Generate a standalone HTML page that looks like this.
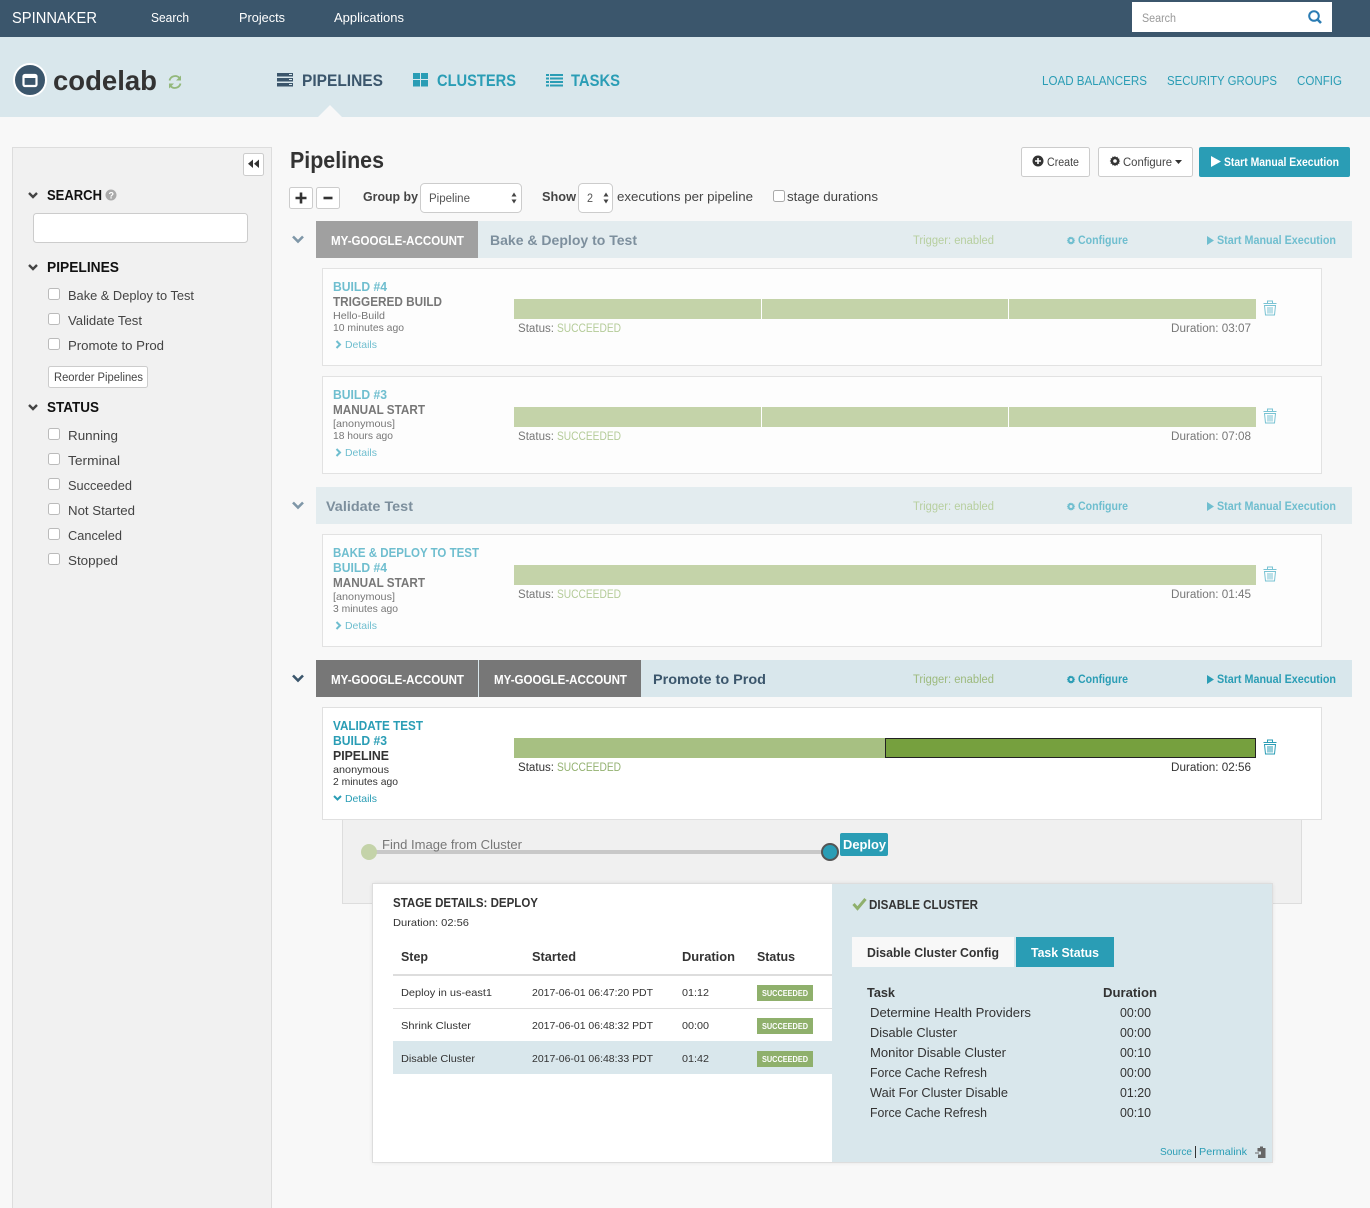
<!DOCTYPE html>
<html><head><meta charset="utf-8"><title>Spinnaker</title>
<style>
html,body{margin:0;padding:0;background:#f8f8f8;width:1370px;height:1208px;overflow:hidden}
svg{display:block}
text{font-family:"Liberation Sans",sans-serif;font-size:13px;fill:#444;white-space:pre}
.b{font-weight:bold}
.s12{font-size:11.5px}.s11{font-size:10.5px}.s14{font-size:14px}.s16{font-size:15.5px}
.teal{fill:#2a9db5}.lteal{fill:#6fbecf}.w{fill:#fff}
.g{fill:#777}.gg{fill:#93a86f}
</style></head><body>
<svg xmlns="http://www.w3.org/2000/svg" width="1370" height="1208" viewBox="0 0 1370 1208">
<defs>
<filter id="sh" x="-3%" y="-5%" width="106%" height="110%"><feGaussianBlur stdDeviation="2.500"/></filter>
<g id="trash" fill="none" stroke-width="1"><path d="M0.500 3.500H13.500M4.500 3.500V1H9.500V3.500M1.500 5.500H12.500L11.500 15H2.500ZM5 7V13.500M7 7V13.500M9 7V13.500"/></g>
<path id="chev" d="M-5 -2.500L0 2.500L5 -2.500" fill="none" stroke-width="2.600"/>
<path id="chevs" d="M-4 -2L0 2L4 -2" fill="none" stroke-width="2.400"/>
<path id="chevr" d="M-2 -3.500L1.500 0L-2 3.500" fill="none" stroke-width="2"/>
<path id="gear" fill-rule="evenodd" d="M0-5l1 1.300 1.600-.5.300 1.600 1.600.3-.5 1.600L5.300 0 4 1l.5 1.600-1.600.3-.3 1.600L1 4 0 5.300-1 4l-1.600.5-.3-1.600-1.600-.3.5-1.600L-5.300 0-4-1l-.5-1.600 1.600-.3.3-1.600L-1-4zM0-1.800A1.800 1.800 0 1 0 0 1.800A1.800 1.800 0 1 0 0-1.800z"/>
</defs>

<!-- top bar -->
<rect width="1370" height="37" fill="#3b566c"/>
<text class="w" style="font-size:15.500px" x="12" y="23" textLength="85" lengthAdjust="spacingAndGlyphs">SPINNAKER</text>
<text class="w" x="151" y="22" textLength="38" lengthAdjust="spacingAndGlyphs">Search</text>
<text class="w" x="239" y="22" textLength="46" lengthAdjust="spacingAndGlyphs">Projects</text>
<text class="w" x="334" y="22" textLength="70" lengthAdjust="spacingAndGlyphs">Applications</text>
<rect x="1132" y="2" width="200" height="30" fill="#fff"/>
<text class="s12" style="fill:#999" x="1142" y="22" textLength="34" lengthAdjust="spacingAndGlyphs">Search</text>
<circle cx="1314" cy="16" r="4.800" fill="none" stroke="#2b7cb3" stroke-width="2"/><path d="M1317.500 19.500L1321 23" stroke="#2b7cb3" stroke-width="2.600"/>

<!-- app header -->
<rect y="37" width="1370" height="80" fill="#d9e7ec"/>
<path d="M318 117L330 105L342 117Z" fill="#f8f8f8"/>
<circle cx="30" cy="80" r="16" fill="#3b566c" stroke="#fff" stroke-width="2"/>
<rect x="23.500" y="75" width="13" height="11" rx="1.500" fill="none" stroke="#fff" stroke-width="2.200"/><rect x="23" y="75" width="14" height="3" fill="#fff"/>
<text class="b" style="font-size:28px;fill:#333" x="53" y="90" textLength="104" lengthAdjust="spacingAndGlyphs">codelab</text>
<g fill="none" stroke="#93b87b" stroke-width="1.800"><path d="M169.500 80.500A5.800 5.800 0 0 1 179.500 78"/><path d="M180.500 83.500A5.800 5.800 0 0 1 170.500 86"/></g>
<path d="M181 75.500V80.500H176ZM169 88.500V83.500H174Z" fill="#93b87b"/>

<g fill="#3b566c"><rect x="277" y="73" width="16" height="3.500"/><rect x="277" y="78" width="16" height="3.500"/><rect x="277" y="83" width="16" height="3.500"/></g>
<g fill="#d9e7ec"><rect x="289" y="74" width="3" height="1"/><rect x="289" y="79" width="3" height="1"/><rect x="289" y="84" width="3" height="1"/></g>
<text class="b" style="font-size:16.500px;fill:#3b566c" x="302" y="86" textLength="81" lengthAdjust="spacingAndGlyphs">PIPELINES</text>
<g fill="#2a9db5"><rect x="413" y="73" width="7" height="6"/><rect x="421" y="73" width="7" height="6"/><rect x="413" y="80" width="7" height="6.500"/><rect x="421" y="80" width="7" height="6.500"/></g>
<text class="b teal" style="font-size:16.500px" x="437" y="86" textLength="79" lengthAdjust="spacingAndGlyphs">CLUSTERS</text>
<g fill="#2a9db5"><rect x="546" y="74" width="3" height="2"/><rect x="550" y="74" width="13" height="2"/><rect x="546" y="77.500" width="3" height="2"/><rect x="550" y="77.500" width="13" height="2"/><rect x="546" y="81" width="3" height="2"/><rect x="550" y="81" width="13" height="2"/><rect x="546" y="84.500" width="3" height="2"/><rect x="550" y="84.500" width="13" height="2"/></g>
<text class="b teal" style="font-size:16.500px" x="571" y="86" textLength="49" lengthAdjust="spacingAndGlyphs">TASKS</text>
<text class="teal" x="1042" y="85" textLength="105" lengthAdjust="spacingAndGlyphs">LOAD BALANCERS</text>
<text class="teal" x="1167" y="85" textLength="110" lengthAdjust="spacingAndGlyphs">SECURITY GROUPS</text>
<text class="teal" x="1297" y="85" textLength="45" lengthAdjust="spacingAndGlyphs">CONFIG</text>

<!-- sidebar -->
<rect x="12.500" y="147.500" width="259" height="1070" fill="#f1f1f1" stroke="#ddd"/>
<rect x="243.500" y="153.500" width="20" height="22" rx="2" fill="#fff" stroke="#ccc"/>
<path d="M253 159.500V168L248 163.750ZM259 159.500V168L254 163.750Z" fill="#333"/>
<use href="#chevs" x="33" y="195" stroke="#444"/>
<text class="b" style="font-size:15px;fill:#111" x="47" y="200" textLength="55" lengthAdjust="spacingAndGlyphs">SEARCH</text>
<circle cx="111" cy="195" r="5.500" fill="#aaa"/><text class="b w" style="font-size:9px" x="108.500" y="198.500">?</text>
<rect x="33.500" y="213.500" width="214" height="29" rx="3" fill="#fff" stroke="#ccc"/>
<use href="#chevs" x="33" y="267" stroke="#444"/>
<text class="b" style="font-size:15px;fill:#111" x="47" y="272" textLength="72" lengthAdjust="spacingAndGlyphs">PIPELINES</text>
<g fill="#fff" stroke="#bbb"><rect x="48.500" y="288.500" width="11" height="11" rx="2"/><rect x="48.500" y="313.500" width="11" height="11" rx="2"/><rect x="48.500" y="338.500" width="11" height="11" rx="2"/>
<rect x="48.500" y="428.500" width="11" height="11" rx="2"/><rect x="48.500" y="453.500" width="11" height="11" rx="2"/><rect x="48.500" y="478.500" width="11" height="11" rx="2"/><rect x="48.500" y="503.500" width="11" height="11" rx="2"/><rect x="48.500" y="528.500" width="11" height="11" rx="2"/><rect x="48.500" y="553.500" width="11" height="11" rx="2"/></g>
<text x="68" y="300" textLength="126" lengthAdjust="spacingAndGlyphs">Bake &amp; Deploy to Test</text>
<text x="68" y="325" textLength="74" lengthAdjust="spacingAndGlyphs">Validate Test</text>
<text x="68" y="350" textLength="96" lengthAdjust="spacingAndGlyphs">Promote to Prod</text>
<rect x="48.500" y="366.500" width="99" height="21" rx="2" fill="#fff" stroke="#ccc"/>
<text class="s12" x="54" y="381" textLength="89" lengthAdjust="spacingAndGlyphs">Reorder Pipelines</text>
<use href="#chevs" x="33" y="407" stroke="#444"/>
<text class="b" style="font-size:15px;fill:#111" x="47" y="412" textLength="52" lengthAdjust="spacingAndGlyphs">STATUS</text>
<text x="68" y="440" textLength="50" lengthAdjust="spacingAndGlyphs">Running</text>
<text x="68" y="465" textLength="52" lengthAdjust="spacingAndGlyphs">Terminal</text>
<text x="68" y="490" textLength="64" lengthAdjust="spacingAndGlyphs">Succeeded</text>
<text x="68" y="515" textLength="67" lengthAdjust="spacingAndGlyphs">Not Started</text>
<text x="68" y="540" textLength="54" lengthAdjust="spacingAndGlyphs">Canceled</text>
<text x="68" y="565" textLength="50" lengthAdjust="spacingAndGlyphs">Stopped</text>

<!-- page title & controls -->
<text class="b" style="font-size:23px;fill:#333" x="290" y="168" textLength="94" lengthAdjust="spacingAndGlyphs">Pipelines</text>
<rect x="1021.500" y="147.500" width="68" height="29" rx="2" fill="#fff" stroke="#ccc"/>
<circle cx="1038" cy="161" r="5.500" fill="#333"/><path d="M1035 161H1041M1038 158V164" stroke="#fff" stroke-width="1.600"/>
<text class="s12" x="1047" y="166" textLength="32" lengthAdjust="spacingAndGlyphs">Create</text>
<rect x="1098.500" y="147.500" width="94" height="29" rx="2" fill="#fff" stroke="#ccc"/>
<use href="#gear" x="1115" y="161" fill="#333"/>
<text class="s12" x="1123" y="166" textLength="49" lengthAdjust="spacingAndGlyphs">Configure</text>
<path d="M1175 160H1182L1178.500 164Z" fill="#333"/>
<rect x="1199" y="147" width="151" height="30" rx="2" fill="#2a9db5"/>
<path d="M1211 156V167L1221 161.500Z" fill="#fff"/>
<text class="b s12 w" x="1224" y="166" textLength="115" lengthAdjust="spacingAndGlyphs">Start Manual Execution</text>

<rect x="289.500" y="187.500" width="23" height="21" rx="2" fill="#fff" stroke="#ccc"/><path d="M295.500 198H306.500M301 192.500V203.500" stroke="#333" stroke-width="2.600"/>
<rect x="316.500" y="187.500" width="23" height="21" rx="2" fill="#fff" stroke="#ccc"/><path d="M323.500 198H332.500" stroke="#333" stroke-width="2.600"/>
<text class="b" x="363" y="201" textLength="55" lengthAdjust="spacingAndGlyphs">Group by</text>
<rect x="420.500" y="183.500" width="101" height="29" rx="4" fill="#fff" stroke="#ccc"/>
<text class="s12" style="fill:#555" x="429" y="202" textLength="41" lengthAdjust="spacingAndGlyphs">Pipeline</text>
<path d="M511.500 196.500H516.500L514 192.500ZM511.500 199.500H516.500L514 203.500Z" fill="#444"/>
<text class="b" x="542" y="201" textLength="34" lengthAdjust="spacingAndGlyphs">Show</text>
<rect x="578.500" y="183.500" width="34" height="29" rx="4" fill="#fff" stroke="#ccc"/>
<text class="s12" style="fill:#555" x="587" y="202" textLength="6" lengthAdjust="spacingAndGlyphs">2</text>
<path d="M603.500 196.500H608.500L606 192.500ZM603.500 199.500H608.500L606 203.500Z" fill="#444"/>
<text x="617" y="201" textLength="136" lengthAdjust="spacingAndGlyphs">executions per pipeline</text>
<rect x="773.500" y="190.500" width="11" height="11" rx="2" fill="#fff" stroke="#aaa"/>
<text x="787" y="201" textLength="91" lengthAdjust="spacingAndGlyphs">stage durations</text>

<!-- group 1 -->
<use href="#chev" x="298" y="239" stroke="#7f97a8"/>
<rect x="316" y="221" width="1036" height="37" fill="#e3ecef"/>
<rect x="316" y="221" width="162" height="37" fill="#a0a0a0"/>
<text class="b w" x="331" y="245" textLength="133" lengthAdjust="spacingAndGlyphs">MY-GOOGLE-ACCOUNT</text>
<text class="b s14" style="fill:#7d8f9d" x="490" y="245" textLength="147" lengthAdjust="spacingAndGlyphs">Bake &amp; Deploy to Test</text>
<text class="s12" style="fill:#b7cf9f" x="913" y="244" textLength="81" lengthAdjust="spacingAndGlyphs">Trigger: enabled</text>
<use href="#gear" x="1071" y="240.500" fill="#6fbecf" transform="translate(1071,240.500) scale(.8) translate(-1071,-240.500)"/>
<text class="b s12 lteal" x="1078" y="244" textLength="50" lengthAdjust="spacingAndGlyphs">Configure</text>
<path d="M1207 236V245L1214 240.500Z" fill="#6fbecf"/>
<text class="b s12 lteal" x="1217" y="244" textLength="119" lengthAdjust="spacingAndGlyphs">Start Manual Execution</text>

<!-- card 1 -->
<rect x="322.500" y="268.500" width="999" height="97" fill="#fdfdfd" stroke="#e2e2e2"/>
<text class="b lteal" x="333" y="291" textLength="54" lengthAdjust="spacingAndGlyphs">BUILD #4</text>
<text class="b g" x="333" y="306" textLength="109" lengthAdjust="spacingAndGlyphs">TRIGGERED BUILD</text>
<text class="s11 g" x="333" y="319" textLength="52" lengthAdjust="spacingAndGlyphs">Hello-Build</text>
<text class="s11 g" x="333" y="331" textLength="71" lengthAdjust="spacingAndGlyphs">10 minutes ago</text>
<use href="#chevr" x="338.500" y="344.500" stroke="#6fbecf"/>
<text class="s11 lteal" x="345" y="348" textLength="32" lengthAdjust="spacingAndGlyphs">Details</text>
<rect x="514" y="299" width="742" height="20" fill="#c4d3a9"/><rect x="761" y="299" width="1" height="20" fill="#fff"/><rect x="1008" y="299" width="1" height="20" fill="#fff"/>
<text class="s12 g" x="518" y="332" textLength="36" lengthAdjust="spacingAndGlyphs">Status:</text>
<text class="s12" style="fill:#b4cb98" x="557" y="332" textLength="64" lengthAdjust="spacingAndGlyphs">SUCCEEDED</text>
<text class="s12 g" x="1171" y="332" textLength="80" lengthAdjust="spacingAndGlyphs">Duration: 03:07</text>
<use href="#trash" x="1263" y="300" stroke="#79c3d3"/>

<!-- card 2 -->
<rect x="322.500" y="376.500" width="999" height="97" fill="#fdfdfd" stroke="#e2e2e2"/>
<text class="b lteal" x="333" y="399" textLength="54" lengthAdjust="spacingAndGlyphs">BUILD #3</text>
<text class="b g" x="333" y="414" textLength="92" lengthAdjust="spacingAndGlyphs">MANUAL START</text>
<text class="s11 g" x="333" y="427" textLength="62" lengthAdjust="spacingAndGlyphs">[anonymous]</text>
<text class="s11 g" x="333" y="439" textLength="60" lengthAdjust="spacingAndGlyphs">18 hours ago</text>
<use href="#chevr" x="338.500" y="452.500" stroke="#6fbecf"/>
<text class="s11 lteal" x="345" y="456" textLength="32" lengthAdjust="spacingAndGlyphs">Details</text>
<rect x="514" y="407" width="742" height="20" fill="#c4d3a9"/><rect x="761" y="407" width="1" height="20" fill="#fff"/><rect x="1008" y="407" width="1" height="20" fill="#fff"/>
<text class="s12 g" x="518" y="440" textLength="36" lengthAdjust="spacingAndGlyphs">Status:</text>
<text class="s12" style="fill:#b4cb98" x="557" y="440" textLength="64" lengthAdjust="spacingAndGlyphs">SUCCEEDED</text>
<text class="s12 g" x="1171" y="440" textLength="80" lengthAdjust="spacingAndGlyphs">Duration: 07:08</text>
<use href="#trash" x="1263" y="408" stroke="#79c3d3"/>

<!-- group 2 -->
<use href="#chev" x="298" y="505" stroke="#7f97a8"/>
<rect x="316" y="487" width="1036" height="37" fill="#e3ecef"/>
<text class="b s14" style="fill:#7d8f9d" x="326" y="511" textLength="87" lengthAdjust="spacingAndGlyphs">Validate Test</text>
<text class="s12" style="fill:#b7cf9f" x="913" y="510" textLength="81" lengthAdjust="spacingAndGlyphs">Trigger: enabled</text>
<use href="#gear" x="1071" y="506.500" fill="#6fbecf" transform="translate(1071,506.500) scale(.8) translate(-1071,-506.500)"/>
<text class="b s12 lteal" x="1078" y="510" textLength="50" lengthAdjust="spacingAndGlyphs">Configure</text>
<path d="M1207 502V511L1214 506.500Z" fill="#6fbecf"/>
<text class="b s12 lteal" x="1217" y="510" textLength="119" lengthAdjust="spacingAndGlyphs">Start Manual Execution</text>

<!-- card 3 -->
<rect x="322.500" y="534.500" width="999" height="112" fill="#fdfdfd" stroke="#e2e2e2"/>
<text class="b lteal" x="333" y="557" textLength="146" lengthAdjust="spacingAndGlyphs">BAKE &amp; DEPLOY TO TEST</text>
<text class="b lteal" x="333" y="572" textLength="54" lengthAdjust="spacingAndGlyphs">BUILD #4</text>
<text class="b g" x="333" y="587" textLength="92" lengthAdjust="spacingAndGlyphs">MANUAL START</text>
<text class="s11 g" x="333" y="600" textLength="62" lengthAdjust="spacingAndGlyphs">[anonymous]</text>
<text class="s11 g" x="333" y="612" textLength="65" lengthAdjust="spacingAndGlyphs">3 minutes ago</text>
<use href="#chevr" x="338.500" y="625.500" stroke="#6fbecf"/>
<text class="s11 lteal" x="345" y="629" textLength="32" lengthAdjust="spacingAndGlyphs">Details</text>
<rect x="514" y="565" width="742" height="20" fill="#c4d3a9"/>
<text class="s12 g" x="518" y="598" textLength="36" lengthAdjust="spacingAndGlyphs">Status:</text>
<text class="s12" style="fill:#b4cb98" x="557" y="598" textLength="64" lengthAdjust="spacingAndGlyphs">SUCCEEDED</text>
<text class="s12 g" x="1171" y="598" textLength="80" lengthAdjust="spacingAndGlyphs">Duration: 01:45</text>
<use href="#trash" x="1263" y="566" stroke="#79c3d3"/>

<!-- group 3 -->
<use href="#chev" x="298" y="678" stroke="#3b566c"/>
<rect x="316" y="660" width="1036" height="37" fill="#d9e7ec"/>
<rect x="316" y="660" width="162" height="37" fill="#777"/><rect x="479" y="660" width="162" height="37" fill="#777"/>
<text class="b w" x="331" y="684" textLength="133" lengthAdjust="spacingAndGlyphs">MY-GOOGLE-ACCOUNT</text>
<text class="b w" x="494" y="684" textLength="133" lengthAdjust="spacingAndGlyphs">MY-GOOGLE-ACCOUNT</text>
<text class="b s14" style="fill:#3b566c" x="653" y="684" textLength="113" lengthAdjust="spacingAndGlyphs">Promote to Prod</text>
<text class="s12" style="fill:#9dba7d" x="913" y="683" textLength="81" lengthAdjust="spacingAndGlyphs">Trigger: enabled</text>
<use href="#gear" x="1071" y="679.500" fill="#2a9db5" transform="translate(1071,679.500) scale(.8) translate(-1071,-679.500)"/>
<text class="b s12 teal" x="1078" y="683" textLength="50" lengthAdjust="spacingAndGlyphs">Configure</text>
<path d="M1207 675V684L1214 679.500Z" fill="#2a9db5"/>
<text class="b s12 teal" x="1217" y="683" textLength="119" lengthAdjust="spacingAndGlyphs">Start Manual Execution</text>

<!-- details area behind card 4 -->
<rect x="342.500" y="810.500" width="959" height="93" fill="#f0f0f0" stroke="#ddd"/>

<!-- card 4 -->
<rect x="322.500" y="707.500" width="999" height="112" fill="#fff" stroke="#e0e0e0"/>
<text class="b teal" x="333" y="730" textLength="90" lengthAdjust="spacingAndGlyphs">VALIDATE TEST</text>
<text class="b teal" x="333" y="745" textLength="54" lengthAdjust="spacingAndGlyphs">BUILD #3</text>
<text class="b" style="fill:#333" x="333" y="760" textLength="56" lengthAdjust="spacingAndGlyphs">PIPELINE</text>
<text class="s11" style="fill:#333" x="333" y="773" textLength="56" lengthAdjust="spacingAndGlyphs">anonymous</text>
<text class="s11" style="fill:#333" x="333" y="785" textLength="65" lengthAdjust="spacingAndGlyphs">2 minutes ago</text>
<path d="M334 796L337.500 799.500L341 796" fill="none" stroke="#2a9db5" stroke-width="2"/>
<text class="s11 teal" x="345" y="802" textLength="32" lengthAdjust="spacingAndGlyphs">Details</text>
<rect x="514" y="738" width="371" height="20" fill="#a7c082"/>
<rect x="885.500" y="738.500" width="370" height="19" fill="#76a03e" stroke="#222"/>
<text class="s12" style="fill:#333" x="518" y="771" textLength="36" lengthAdjust="spacingAndGlyphs">Status:</text>
<text class="s12" style="fill:#93b170" x="557" y="771" textLength="64" lengthAdjust="spacingAndGlyphs">SUCCEEDED</text>
<text class="s12" style="fill:#333" x="1171" y="771" textLength="80" lengthAdjust="spacingAndGlyphs">Duration: 02:56</text>
<use href="#trash" x="1263" y="739" stroke="#2a9db5"/>

<!-- stage graph -->
<rect x="369" y="850" width="461" height="4" fill="#c8c8c8"/>
<circle cx="369" cy="852" r="8" fill="#c4d3a9"/>
<circle cx="830" cy="852" r="8" fill="#2a9db5" stroke="#555" stroke-width="2"/>
<text style="fill:#777" x="382" y="849" textLength="140" lengthAdjust="spacingAndGlyphs">Find Image from Cluster</text>
<rect x="840" y="833" width="48" height="23" rx="2" fill="#2a9db5"/>
<text class="b w" x="843" y="849" textLength="43" lengthAdjust="spacingAndGlyphs">Deploy</text>

<!-- stage detail panel -->
<rect x="373" y="884" width="899" height="278" fill="#000" opacity=".12" filter="url(#sh)"/>
<rect x="372.500" y="883.500" width="900" height="279" fill="#fff" stroke="#ddd"/>
<rect x="832" y="884" width="440" height="278" fill="#d9e7ec"/>
<text class="b" style="fill:#333" x="393" y="907" textLength="145" lengthAdjust="spacingAndGlyphs">STAGE DETAILS: DEPLOY</text>
<text class="s11" style="fill:#333" x="393" y="926" textLength="76" lengthAdjust="spacingAndGlyphs">Duration: 02:56</text>
<text class="b" style="fill:#333" x="401" y="961" textLength="27" lengthAdjust="spacingAndGlyphs">Step</text>
<text class="b" style="fill:#333" x="532" y="961" textLength="44" lengthAdjust="spacingAndGlyphs">Started</text>
<text class="b" style="fill:#333" x="682" y="961" textLength="53" lengthAdjust="spacingAndGlyphs">Duration</text>
<text class="b" style="fill:#333" x="757" y="961" textLength="38" lengthAdjust="spacingAndGlyphs">Status</text>
<rect x="393" y="974" width="439" height="2" fill="#ddd"/>
<rect x="393" y="1008" width="439" height="1" fill="#ddd"/>
<rect x="393" y="1041" width="439" height="33" fill="#d9e7ec"/>
<text class="s11" style="fill:#333" x="401" y="996" textLength="91" lengthAdjust="spacingAndGlyphs">Deploy in us-east1</text>
<text class="s11" style="fill:#333" x="532" y="996" textLength="121" lengthAdjust="spacingAndGlyphs">2017-06-01 06:47:20 PDT</text>
<text class="s11" style="fill:#333" x="682" y="996" textLength="27" lengthAdjust="spacingAndGlyphs">01:12</text>
<text class="s11" style="fill:#333" x="401" y="1029" textLength="70" lengthAdjust="spacingAndGlyphs">Shrink Cluster</text>
<text class="s11" style="fill:#333" x="532" y="1029" textLength="121" lengthAdjust="spacingAndGlyphs">2017-06-01 06:48:32 PDT</text>
<text class="s11" style="fill:#333" x="682" y="1029" textLength="27" lengthAdjust="spacingAndGlyphs">00:00</text>
<text class="s11" style="fill:#333" x="401" y="1062" textLength="74" lengthAdjust="spacingAndGlyphs">Disable Cluster</text>
<text class="s11" style="fill:#333" x="532" y="1062" textLength="121" lengthAdjust="spacingAndGlyphs">2017-06-01 06:48:33 PDT</text>
<text class="s11" style="fill:#333" x="682" y="1062" textLength="27" lengthAdjust="spacingAndGlyphs">01:42</text>
<rect x="757" y="985" width="56" height="16" fill="#8fb06c"/><text class="b w" style="font-size:8.500px" x="762" y="996" textLength="46" lengthAdjust="spacingAndGlyphs">SUCCEEDED</text>
<rect x="757" y="1018" width="56" height="16" fill="#8fb06c"/><text class="b w" style="font-size:8.500px" x="762" y="1029" textLength="46" lengthAdjust="spacingAndGlyphs">SUCCEEDED</text>
<rect x="757" y="1051" width="56" height="16" fill="#8fb06c"/><text class="b w" style="font-size:8.500px" x="762" y="1062" textLength="46" lengthAdjust="spacingAndGlyphs">SUCCEEDED</text>

<path d="M853.500 904L857.500 908.500L865.500 899" fill="none" stroke="#8fb06c" stroke-width="3"/>
<text class="b" style="fill:#333" x="869" y="909" textLength="109" lengthAdjust="spacingAndGlyphs">DISABLE CLUSTER</text>
<rect x="852" y="937" width="162" height="30" fill="#f8f8f8"/>
<text class="b" style="fill:#333" x="867" y="957" textLength="132" lengthAdjust="spacingAndGlyphs">Disable Cluster Config</text>
<rect x="1016" y="937" width="98" height="30" fill="#2a9db5"/>
<text class="b w" x="1031" y="957" textLength="68" lengthAdjust="spacingAndGlyphs">Task Status</text>
<text class="b" style="fill:#333" x="867" y="997" textLength="28" lengthAdjust="spacingAndGlyphs">Task</text>
<text class="b" style="fill:#333" x="1103" y="997" textLength="54" lengthAdjust="spacingAndGlyphs">Duration</text>
<text style="fill:#333" x="870" y="1017" textLength="161" lengthAdjust="spacingAndGlyphs">Determine Health Providers</text>
<text style="fill:#333" x="1120" y="1017" textLength="31" lengthAdjust="spacingAndGlyphs">00:00</text>
<text style="fill:#333" x="870" y="1037" textLength="87" lengthAdjust="spacingAndGlyphs">Disable Cluster</text>
<text style="fill:#333" x="1120" y="1037" textLength="31" lengthAdjust="spacingAndGlyphs">00:00</text>
<text style="fill:#333" x="870" y="1057" textLength="136" lengthAdjust="spacingAndGlyphs">Monitor Disable Cluster</text>
<text style="fill:#333" x="1120" y="1057" textLength="31" lengthAdjust="spacingAndGlyphs">00:10</text>
<text style="fill:#333" x="870" y="1077" textLength="117" lengthAdjust="spacingAndGlyphs">Force Cache Refresh</text>
<text style="fill:#333" x="1120" y="1077" textLength="31" lengthAdjust="spacingAndGlyphs">00:00</text>
<text style="fill:#333" x="870" y="1097" textLength="138" lengthAdjust="spacingAndGlyphs">Wait For Cluster Disable</text>
<text style="fill:#333" x="1120" y="1097" textLength="31" lengthAdjust="spacingAndGlyphs">01:20</text>
<text style="fill:#333" x="870" y="1117" textLength="117" lengthAdjust="spacingAndGlyphs">Force Cache Refresh</text>
<text style="fill:#333" x="1120" y="1117" textLength="31" lengthAdjust="spacingAndGlyphs">00:10</text>
<text class="s11 teal" x="1160" y="1155" textLength="32" lengthAdjust="spacingAndGlyphs">Source</text>
<rect x="1195" y="1146" width="1" height="12" fill="#333"/>
<text class="s11 teal" x="1199" y="1155" textLength="48" lengthAdjust="spacingAndGlyphs">Permalink</text>
<path d="M1257.500 1148H1260V1146.500H1263V1148H1265.500V1158H1258V1154.500H1261V1151.500H1257.500Z" fill="#666"/><path d="M1255 1153H1259" stroke="#666"/>
</svg>
</body></html>
